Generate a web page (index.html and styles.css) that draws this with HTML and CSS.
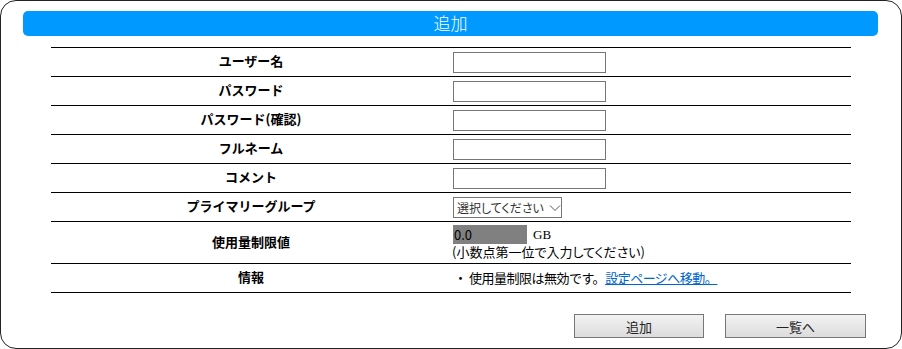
FILE: index.html
```html
<!DOCTYPE html>
<html lang="ja">

  <head>
    <meta charset="UTF-8">
    <meta name="viewport" content="width=device-width, initial-scale=1.0">
    <title>追加</title>

    <link rel="stylesheet" href="styles.css">
  </head>

  <body>

    <div class="panel">

      <h1 class="panel-title">追加</h1>

      <form>
        <table class="form-table">
          <tr>
            <th>ユーザー名</th>
            <td><input type="text" name="username" class="text-input"></td>
          </tr>
          <tr>
            <th>パスワード</th>
            <td><input type="password" name="password" class="text-input"></td>
          </tr>
          <tr>
            <th>パスワード(確認)</th>
            <td><input type="password" name="confirm-password" class="text-input"></td>
          </tr>
          <tr>
            <th>フルネーム</th>
            <td><input type="text" name="fullname" class="text-input"></td>
          </tr>
          <tr>
            <th>コメント</th>
            <td><input type="text" name="comment" class="text-input"></td>
          </tr>
          <tr>
            <th>プライマリーグループ</th>
            <td>
              <div class="select-box">
                <span>選択してください</span>
                <svg width="12" height="8" viewBox="0 0 12 8">
                  <path d="M1 1.5 L6 6.5 L11 1.5" fill="none" stroke="#555" stroke-width="1"></path>
                </svg>
              </div>
            </td>
          </tr>
          <tr class="tall-row">
            <th>使用量制限値</th>
            <td>
              <div class="quota">
                <input type="text" name="quota" class="quota-input" value="0.0" disabled>
                <span class="unit">GB</span>
              </div>
              <p class="hint">(小数点第一位で入力してください)</p>
            </td>
          </tr>
          <tr>
            <th>情報</th>
            <td>
              <p class="info">・ 使用量制限は無効です。<a href="#">設定ページへ移動。</a></p>
            </td>
          </tr>
        </table>

        <div class="actions">
          <button type="submit" class="btn btn-add">追加</button>
          <button type="button" class="btn btn-list">一覧へ</button>
        </div>
      </form>

    </div>

  </body>

</html>
```

FILE: styles.css
```css
* {
  margin: 0;
  padding: 0;
  box-sizing: border-box;
}

body {
  font-family: "Noto Sans CJK JP", "Noto Sans", sans-serif;
  font-size: 13px;
  color: #000;
  background: #fff;
}

.panel {
  width: 902px;
  height: 349px;
  border: 1px solid #222;
  border-radius: 16px;
  padding-top: 10px;
}

.panel-title {
  margin: 0 23px 0 22px;
  height: 25px;
  background-color: #0099ff;
  border-radius: 5px;
  color: #fff;
  font-size: 17px;
  font-weight: 300;
  line-height: 24px;
  text-align: center;
}

form {
  display: flex;
  flex-direction: column;
}

.form-table {
  width: 800px;
  margin: 11px auto 0;
  border-collapse: collapse;

  & tr {
    height: 29px;
    border-top: 1px solid #000;
    border-bottom: 1px solid #000;
  }

  & .tall-row {
    height: 42px;
  }

  & th {
    width: 400px;
    font-size: 13px;
    font-weight: bold;
    text-align: center;
    vertical-align: middle;
    padding-bottom: 3px;
  }

  & td {
    padding-left: 2px;
    vertical-align: middle;
  }
}

.text-input {
  display: block;
  width: 153px;
  height: 21px;
  border: 1px solid #767676;
  background: #fff;
  margin-top: 1px;
}

.select-box {
  display: flex;
  align-items: center;
  gap: 5px;
  width: 109px;
  height: 21px;
  border: 1px solid #767676;
  padding-left: 3px;
  font-size: 12px;
  font-feature-settings: "palt";
  color: #333;
  white-space: nowrap;
  overflow: hidden;
  margin-top: 1px;
}

.quota {
  display: flex;
  align-items: center;
  gap: 6px;
}

.quota-input {
  width: 74px;
  height: 19px;
  border: none;
  background: #808080;
  color: #000;
  font-family: "Noto Sans CJK JP", sans-serif;
  font-size: 13px;
  padding-left: 1px;
}

.unit {
  font-family: "Liberation Serif", serif;
  font-size: 13px;
}

.hint {
  font-size: 13px;
  font-feature-settings: "palt";
  line-height: 16px;
  margin-left: -1px;
}

.info {
  font-size: 13px;
  letter-spacing: -0.5px;
  padding-left: 1px;
  padding-bottom: 2px;

  & a {
    color: #0066cc;
  }
}

.actions {
  display: flex;
  justify-content: flex-end;
  gap: 21px;
  margin-top: 21px;
  padding-right: 35px;
}

.btn {
  height: 24px;
  border: 1px solid #777;
  background: linear-gradient(#f2f2f2, #dcdcdc);
  font-family: "Noto Sans CJK JP", sans-serif;
  font-size: 13px;
  color: #222;
}

.btn-add {
  width: 130px;
}

.btn-list {
  width: 141px;
}
```
